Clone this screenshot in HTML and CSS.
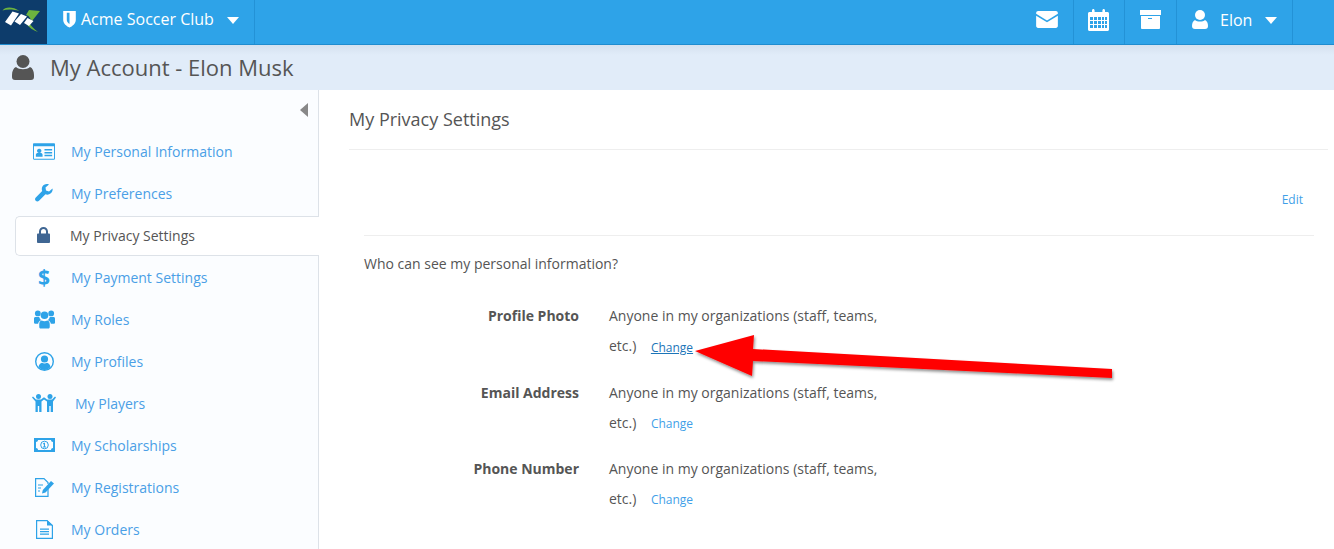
FILE: index.html
```html
<!DOCTYPE html>
<html lang="en">
<head>
<meta charset="utf-8">
<title>My Account</title>
<link rel="stylesheet" href="styles.css">
</head>
<body>
<header class="topbar">
  <a class="logo">
    <svg width="47" height="44" viewBox="0 0 47 44"><g fill="#6cb33f"><path d="M2.500 10.500C5 6.500 13 6.500 19.500 11 13 9 7 9 2.500 10.500Z"/><path d="M26 15 29 10 40 11 32 21 28.500 16Z"/><path d="M28 21C31 26 34 29 38 32 33 30.500 29 27.500 26 23.500Z"/></g><path d="M5 22 12.500 11.500 19 13.500 11 25.500ZM14.500 21.500 21 14 27 16.500 20 25ZM24 23 27.500 18 33.500 21 29 26Z" fill="#fff"/></svg>
  </a>
  <div class="club">
    <svg class="shield" width="15" height="18" viewBox="0 0 16 20"><path d="M1 1H15V11C15 15 11 18 8 19.500 5 18 1 15 1 11ZM5 3V11C5 13 6.500 14.500 8 15.500V3Z" fill="#fff" fill-rule="evenodd"/></svg>
    <span class="club-name">Acme Soccer Club</span>
    <span class="caret"></span>
  </div>
  <div class="top-right">
    <div class="tool tool-mail"><svg width="22" height="17" viewBox="0 0 23 18"><path d="M2 0H21C22 0 23 1 23 2V3L11.500 10 0 3V2C0 1 1 0 2 0ZM0 5 11.500 12 23 5V16C23 17 22 18 21 18H2C1 18 0 17 0 16Z" fill="#fff"/></svg></div>
    <div class="tool tool-cal"><svg width="21" height="22" viewBox="0 0 21 22"><path fill="#fff" fill-rule="evenodd" d="M1.500 3H4V1.500C4 .6 4.600 0 5.300 0S6.600.6 6.600 1.500V3H14.400V1.500C14.400 .6 15 0 15.700 0S17 .6 17 1.500V3H19.500C20.300 3 21 3.700 21 4.500V20.500C21 21.300 20.300 22 19.500 22H1.500C.7 22 0 21.300 0 20.500V4.500C0 3.700.7 3 1.500 3ZM2 8V11H5V8ZM6 8V11H9V8ZM10 8V11H13V8ZM14 8V11H16V8ZM17 8V11H19V8ZM2 12V15H5V12ZM6 12V15H9V12ZM10 12V15H13V12ZM14 12V15H16V12ZM17 12V15H19V12ZM2 16V19H5V16ZM6 16V19H9V16ZM10 16V19H13V16ZM14 16V19H16V16ZM17 16V19H19V16Z"/></svg></div>
    <div class="tool tool-box"><svg width="21" height="19" viewBox="0 0 21 19"><path fill="#fff" fill-rule="evenodd" d="M0 0H21V5H0ZM1 6H20V18C20 18.500 19.500 19 19 19H2C1.500 19 1 18.500 1 18ZM8 8V9H12V8Z"/></svg></div>
    <div class="tool tool-user">
      <svg width="16" height="19" viewBox="0 0 16 19"><circle cx="8" cy="5" r="5" fill="#fff"/><path d="M3 10C5 12 11 12 13 10 15 11 16 13 16 16 16 18 15 19 13 19H3C1 19 0 18 0 16 0 13 1 11 3 10Z" fill="#fff"/></svg>
      <span class="user-name">Elon</span>
      <span class="caret caret-small"></span>
    </div>
  </div>
</header>
<div class="pagebar">
  <svg width="22" height="25" viewBox="0 0 22 25"><circle cx="11" cy="6.500" r="6.500" fill="#555"/><path d="M4 12C7 15 15 15 18 12 20.500 13 22 16 22 20V22C22 24 21 25 19 25H3C1 25 0 24 0 22V20C0 16 1.500 13 4 12Z" fill="#555"/></svg>
  <h1 class="page-title">My Account - Elon Musk</h1>
</div>
<div class="layout">
  <aside class="sidebar">
    <div class="collapse"><span class="collapse-arrow"></span></div>
    <nav class="nav">
      <a class="nav-item"><span class="nav-icon"><svg width="22" height="17" viewBox="0 0 23 17"><path fill="#2ea3e8" fill-rule="evenodd" d="M1 0H22C22.500 0 23 .5 23 1V16C23 16.500 22.500 17 22 17H1C.5 17 0 16.500 0 16V1C0 .5.5 0 1 0ZM1 3V16H22V3ZM6.500 5.500A2.300 2.300 0 1 1 6.499 5.500ZM3 14V12C3 10.500 4 10 5 10H8C9 10 10 10.500 10 12V14ZM12 6H20V7.500H12ZM12 9H20V10.500H12ZM12 12H20V13.500H12Z"/></svg></span><span>My Personal Information</span></a>
      <a class="nav-item"><span class="nav-icon"><svg width="18" height="18" viewBox="0 0 18 18"><path fill="#2ea3e8" d="M17.500 4.500 14 7.500 11 6.500 10.500 3.500 14 .5C11.500-.5 8.500.3 7.300 2.800 6.600 4.300 6.700 5.800 7.200 7.100L.8 13.500C-.2 14.500-.2 15.800.7 16.800 1.700 17.800 3 17.800 4 16.800L10.500 10.300C12.200 11 14.300 10.700 15.800 9.300 17.300 7.900 17.900 6.200 17.500 4.500Z"/></svg></span><span>My Preferences</span></a>
      <a class="nav-item nav-active"><span class="nav-icon"><svg width="13" height="16" viewBox="0 0 13 16"><path fill="#3f6693" fill-rule="evenodd" d="M2 6.500V4.500C2 2 4 0 6.500 0S11 2 11 4.500V6.500H12C12.500 6.500 13 7 13 7.500V15C13 15.500 12.500 16 12 16H1C.5 16 0 15.500 0 15V7.500C0 7 .5 6.500 1 6.500ZM4 6.500H9V4.500C9 3 8 2 6.500 2S4 3 4 4.500Z"/></svg></span><span>My Privacy Settings</span></a>
      <a class="nav-item"><span class="nav-icon"><span class="dollar">$</span></span><span>My Payment Settings</span></a>
      <a class="nav-item"><span class="nav-icon"><svg width="21" height="19" viewBox="0 0 22 19"><g fill="#2ea3e8"><circle cx="4" cy="3.200" r="3"/><circle cx="18" cy="3.200" r="3"/><circle cx="11" cy="5" r="4"/><path d="M0 8.500C0 7.500 1 7 2 7H5.500C5.800 8.500 6.500 9.500 7.500 10.300 5.500 11 4.500 12.300 4.300 14H1C.3 14 0 13.500 0 13ZM22 8.500C22 7.500 21 7 20 7H16.500C16.200 8.500 15.500 9.500 14.500 10.300 16.500 11 17.500 12.300 17.700 14H21C21.700 14 22 13.500 22 13Z"/><path d="M8 10.500C10 11.500 12 11.500 14 10.500 15.800 11 16.500 12.500 16.500 14.500V17C16.500 18 16 19 15 19H7C6 19 5.500 18 5.500 17V14.500C5.500 12.500 6.200 11 8 10.500Z"/></g></svg></span><span>My Roles</span></a>
      <a class="nav-item"><span class="nav-icon"><svg width="19" height="19" viewBox="0 0 19 19"><circle cx="9.500" cy="9.500" r="8.800" fill="none" stroke="#2ea3e8" stroke-width="1.400"/><circle cx="9.500" cy="7" r="3.600" fill="#2ea3e8"/><path d="M3.500 15C4 12.500 5.500 11 7 10.800 8.500 11.700 10.500 11.700 12 10.800 13.500 11 15 12.500 15.500 15 12 19 7 19 3.500 15Z" fill="#2ea3e8"/></svg></span><span>My Profiles</span></a>
      <a class="nav-item nav-item-players"><span class="nav-icon"><svg width="24" height="18" viewBox="0 0 24 18"><g fill="#2ea3e8"><circle cx="6.500" cy="2.500" r="2.500"/><circle cx="18" cy="2.500" r="2.500"/><path d="M0 3.500 1 2.500 4 5.500H9L11.500 3.500 12.500 3.500 15 5.500H20L23 2.500 24 3.500 21 7.500V18H18.700V12H17.300V18H15V7.500L12 5.500 9.500 7.500V18H7.200V12H5.800V18H3.500V7.500Z"/></g></svg></span><span>My Players</span></a>
      <a class="nav-item"><span class="nav-icon"><svg width="21" height="14" viewBox="0 0 21 14"><path fill="#2ea3e8" fill-rule="evenodd" d="M0 0H21V14H0ZM4 2C4 3.200 3.200 4 2 4V10C3.200 10 4 10.800 4 12H17C17 10.800 17.800 10 19 10V4C17.800 4 17 3.200 17 2Z"/><circle cx="10.500" cy="7" r="3.800" fill="none" stroke="#2ea3e8" stroke-width="1"/><path fill="#2ea3e8" d="M10 4.700 8.700 5.700 9.300 6.500 9.900 6V8.600H8.900V9.500H12V8.600H11V4.700Z"/></svg></span><span>My Scholarships</span></a>
      <a class="nav-item"><span class="nav-icon"><svg width="19" height="19" viewBox="0 0 19 19"><path fill="none" stroke="#2ea3e8" stroke-width="1.200" d="M13 11V18.400H.6V.6H9L13 4.600V6"/><path fill="none" stroke="#2ea3e8" stroke-width="1.200" d="M3 7H8M3 10H6M3 13H5"/><path fill="#2ea3e8" d="M16 3 19 5.500 10.500 14.500 7 15.500 7.800 12Z"/></svg></span><span>My Registrations</span></a>
      <a class="nav-item"><span class="nav-icon"><svg width="17" height="19" viewBox="0 0 17 19"><path fill="none" stroke="#2ea3e8" stroke-width="1.200" d="M.6.6H11L16.400 5.500V18.400H.6Z"/><path fill="#2ea3e8" d="M11 0 17 5.500H11ZM4 8.500H13V9.800H4ZM4 11H13V12.300H4ZM4 13.500H13V14.800H4Z"/></svg></span><span>My Orders</span></a>
    </nav>
  </aside>
  <main class="content">
    <h2 class="section-title">My Privacy Settings</h2>
    <div class="edit-row"><a class="link">Edit</a></div>
    <div class="panel">
      <p class="question">Who can see my personal information?</p>
      <dl class="settings">
        <div class="setting"><dt>Profile Photo</dt><dd><div>Anyone in my organizations (staff, teams,</div><div class="value-end"><span>etc.)</span><a class="link change change-hover">Change</a></div></dd></div>
        <div class="setting"><dt>Email Address</dt><dd><div>Anyone in my organizations (staff, teams,</div><div class="value-end"><span>etc.)</span><a class="link change">Change</a></div></dd></div>
        <div class="setting"><dt>Phone Number</dt><dd><div>Anyone in my organizations (staff, teams,</div><div class="value-end"><span>etc.)</span><a class="link change">Change</a></div></dd></div>
      </dl>
    </div>
  </main>
</div>
<svg class="arrow" width="430" height="50" viewBox="0 0 430 50">
  <defs><filter id="arrow-shadow" x="-5%" y="-20%" width="110%" height="150%"><feDropShadow dx="1" dy="2" stdDeviation="1.500" flood-color="#000" flood-opacity=".45"/></filter></defs>
  <path filter="url(#arrow-shadow)" fill="#ff0000" d="M0 16 59 0 58 14 417 34 417 43 58 26 57 41Z"/>
</svg>
</body>
</html>
```
FILE: styles.css
```css
* { box-sizing: border-box; }
html, body { margin: 0; height: 549px; overflow: hidden; }
body { font-family: "Open Sans", sans-serif; font-size: 14px; color: #555; background: #fff; position: relative; }
.topbar { display: flex; height: 45px; background: #2ea3e8; border-bottom: 1px solid #1f8ccf; color: #fff; }
.logo { width: 47px; background: #0d3c6b; display: block; flex: none; height: 44px; }
.logo svg { display: block; }
.club { display: flex; align-items: center; width: 208px; padding: 0 0 6px 15px; border-right: 1px solid #2392d6; }
.shield { flex: none; }
.club-name { margin-left: 4px; font-size: 16px; }
.caret { display: inline-block; width: 0; height: 0; border-left: 6.500px solid transparent; border-right: 6.500px solid transparent; border-top: 7px solid #fff; margin-left: 13px; margin-top: 2px; }
.caret-small { margin-left: 13px; }
.top-right { display: flex; margin-left: auto; margin-right: 41px; height: 44px; }
.tool { display: flex; align-items: center; justify-content: center; height: 44px; padding-bottom: 5px; border-right: 1px solid #2392d6; }
.tool-mail { width: 53px; }
.tool-cal { width: 51px; padding-right: 1px; }
.tool-box { width: 52px; }
.tool-user { width: 116px; justify-content: flex-start; padding-left: 15px; }
.tool svg { display: block; }
.user-name { margin-left: 12px; font-size: 16px; }
.pagebar { display: flex; align-items: center; height: 45px; background: linear-gradient(#d5e1ef, #e1ecf9 10px); padding-left: 12px; }
.page-title { margin: 0 0 2px 16px; font-size: 22px; font-weight: 400; color: #555; }
.layout { display: flex; height: 459px; }
.sidebar { width: 319px; flex: none; background: #fbfdff; border-right: 1px solid #dde2e8; padding-left: 15px; }
.collapse { display: flex; justify-content: flex-end; height: 41px; padding: 13px 10px 0 0; }
.collapse-arrow { width: 0; height: 0; border-top: 7px solid transparent; border-bottom: 7px solid transparent; border-right: 8px solid #888; }
.nav { display: flex; flex-direction: column; margin-right: -1px; }
.nav-item { display: flex; align-items: center; height: 42px; padding-bottom: 2px; color: #4a9fe6; border: 1px solid transparent; border-right: 0; }
.nav-active { height: 40px; margin: 1px 0; background: #fff; color: #555; border-color: #dde2e8; border-radius: 5px 0 0 5px; }
.nav-icon { display: flex; justify-content: center; align-items: center; width: 28px; margin-left: 14px; margin-right: 13px; flex: none; }
.nav-active .nav-icon { margin-left: 13px; margin-right: 13px; }
.nav-item-players > span:last-child { margin-left: 4px; }
.dollar { font-size: 21px; font-weight: 700; color: #2ea3e8; line-height: 1; }
.content { flex: 1; padding-left: 30px; padding-right: 6px; }
.section-title { margin: 0; height: 60px; padding-top: 16px; font-size: 18px; line-height: 26px; font-weight: 400; color: #555; border-bottom: 1px solid #eee; }
.edit-row { display: flex; justify-content: flex-end; height: 85px; padding: 41px 25px 0 0; }
.link { color: #3f9fe8; font-size: 12px; line-height: 18px; height: 18px; }
.panel { margin: 0 14px 0 15px; border-top: 1px solid #eee; }
.question { margin: 0; padding-top: 18px; line-height: 20px; color: #555; }
.settings { margin: 27px 0 0; }
.setting { display: flex; height: 76.500px; }
.setting dt { width: 215px; text-align: right; font-weight: 700; line-height: 30px; color: #555; }
.setting dd { margin: 0 0 0 30px; width: 290px; line-height: 30px; color: #555; }
.value-end { display: flex; align-items: center; }
.change { margin-left: 14.500px; position: relative; top: 1px; }
.change-hover { color: #1c75b8; text-decoration: underline; top: 2px; }
.arrow { position: absolute; left: 695px; top: 335px; pointer-events: none; }
```
